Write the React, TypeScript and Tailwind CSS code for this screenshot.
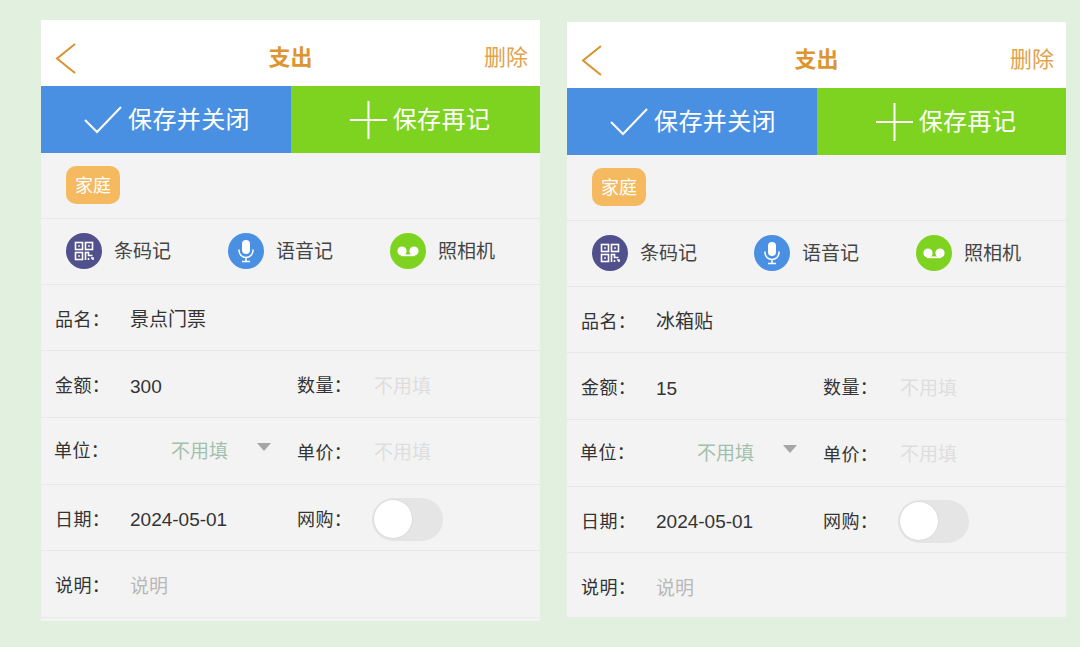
const font = { fontFamily: '"Liberation Sans", "Noto Sans CJK SC", sans-serif' };

function Row({ children, h = "h-[66px]" }: { children: React.ReactNode; h?: string }) {
  return <div className={`${h} shrink-0 relative flex items-center border-b border-[#e8e8e8]`}>{children}</div>;
}

function Label({ children, cls = "left-[14px] mt-[4px]" }: { children: React.ReactNode; cls?: string }) {
  return <span className={`absolute ${cls} text-[18px] leading-none text-[#333] tracking-[0.4px] whitespace-pre`}>{children}</span>;
}

function Val({ children, cls, color = "text-[#333]" }: { children: React.ReactNode; cls: string; color?: string }) {
  return <span className={`absolute ${cls} text-[19px] leading-none ${color} whitespace-pre`}>{children}</span>;
}

function QrIcon() {
  return (
    <svg width="20" height="20" viewBox="0 0 20 20" fill="none" stroke="white" strokeWidth="1.6">
      <rect x="1.5" y="1.5" width="7" height="7" />
      <rect x="11.5" y="1.5" width="7" height="7" />
      <rect x="1.5" y="11.5" width="7" height="7" />
      <rect x="4.2" y="4.2" width="1.6" height="1.6" fill="white" stroke="none" />
      <rect x="14.2" y="4.2" width="1.6" height="1.6" fill="white" stroke="none" />
      <rect x="4.2" y="14.2" width="1.6" height="1.6" fill="white" stroke="none" />
      <path d="M11.5 19v-7.5h3v3h4M14.5 17v2M17 17h2v2" />
    </svg>
  );
}

function MicIcon() {
  return (
    <svg width="20" height="24" viewBox="0 0 20 24" fill="none" stroke="white" strokeWidth="1.5">
      <rect x="6" y="1" width="8" height="14" rx="4" fill="white" stroke="none" />
      <path d="M3 10.5v1a7 7 0 0 0 14 0v-1M10 18.5V22M6 22.5h8" />
    </svg>
  );
}

function TapeIcon() {
  return (
    <svg width="24" height="14" viewBox="0 0 24 14" fill="white">
      <circle cx="6" cy="7" r="4.6" />
      <circle cx="18" cy="7" r="4.6" />
      <rect x="5" y="10.4" width="14" height="1.8" />
    </svg>
  );
}

function Tool({ bg, icon, text, cls }: { bg: string; icon: React.ReactNode; text: string; cls: string }) {
  return (
    <div className={`absolute ${cls} flex items-center gap-[12px] mt-[-2px]`}>
      <span className={`w-9 h-9 rounded-full ${bg} flex items-center justify-center`}>{icon}</span>
      <span className="text-[19px] leading-none text-[#444] mt-[2px]">{text}</span>
    </div>
  );
}

function Phone({ name, amount, height, mt }: { name: string; amount: string; height: string; mt: string }) {
  return (
    <div className={`w-[499px] ${height} ${mt} shrink-0 bg-[#f3f3f3] flex flex-col overflow-hidden`}>
      <div className="h-[66px] shrink-0 bg-white relative flex items-center justify-center">
        <svg className="absolute left-[13px] top-[22px]" width="24" height="32" viewBox="0 0 24 32" fill="none" stroke="#d9922e" strokeWidth="2">
          <path d="M21 2 3 16.5 21 31" />
        </svg>
        <span className="text-[22px] leading-none font-bold text-[#dd9530] mt-[10px]">支出</span>
        <span className="absolute right-[12px] top-[27px] text-[22px] leading-none text-[#e2a24e]">删除</span>
      </div>
      <div className="h-[67px] shrink-0 flex">
        <div className="w-[250px] bg-[#4a90e2] flex items-center justify-center gap-[6px] text-white text-[24px] leading-none pl-[2px]">
          <svg width="38" height="28" viewBox="0 0 38 28" fill="none" stroke="white" strokeWidth="2">
            <path d="M1 14 13 26 37 1" />
          </svg>
          <span className="tracking-[0.4px] mt-[1px]">保存并关闭</span>
        </div>
        <div className="flex-1 bg-[#7ed321] flex items-center justify-center gap-[6px] text-white text-[24px] leading-none pl-[9px]">
          <svg width="37" height="38" viewBox="0 0 37 38" fill="none" stroke="white" strokeWidth="2">
            <path d="M18.5 0v38M0 19h37" />
          </svg>
          <span className="tracking-[0.4px] mt-[1px]">保存再记</span>
        </div>
      </div>
      <Row>
        <span className="absolute left-[25px] top-[13px] w-[54px] h-[38px] rounded-[10px] bg-[#f5b95f] text-white text-[18px] leading-[40px] text-center">家庭</span>
      </Row>
      <Row>
        <Tool cls="left-[25px]" bg="bg-[#50508c]" icon={<QrIcon />} text="条码记" />
        <Tool cls="left-[187px]" bg="bg-[#4a90e2]" icon={<MicIcon />} text="语音记" />
        <Tool cls="left-[349px]" bg="bg-[#7ed321]" icon={<TapeIcon />} text="照相机" />
      </Row>
      <Row>
        <Label>品名：</Label>
        <Val cls="left-[89px] mt-[4px]">{name}</Val>
      </Row>
      <Row h="h-[67px]">
        <Label>金额：</Label>
        <Val cls="left-[89px] mt-[4px]">{amount}</Val>
        <Label cls="left-[256px] mt-[4px]">数量：</Label>
        <Val cls="left-[333px] mt-[4px]" color="text-[#dedede]">不用填</Val>
      </Row>
      <Row h="h-[67px]">
        <Label cls="left-[13px] top-[24px]">单位：</Label>
        <Val cls="left-[130px] top-[24px]" color="text-[#a3bfae]">不用填</Val>
        <span className="absolute left-[216px] top-[25px] w-0 h-0 border-x-[7px] border-x-transparent border-t-[8px] border-t-[#a6a6a6]" />
        <Label cls="left-[256px] top-[26px]">单价：</Label>
        <Val cls="left-[333px] top-[25px]" color="text-[#dedede]">不用填</Val>
      </Row>
      <Row>
        <Label>日期：</Label>
        <Val cls="left-[89px] mt-[4px]">2024-05-01</Val>
        <Label cls="left-[256px] mt-[4px]">网购：</Label>
        <span className="absolute left-[331px] top-[13px] w-[71px] h-[43px] rounded-full bg-[#e5e5e5]">
          <span className="absolute left-[2px] top-[2px] w-[38px] h-[38px] rounded-full bg-white shadow-[0_0_2px_rgba(0,0,0,0.12)]" />
        </span>
      </Row>
      <Row h="h-[67px]">
        <Label>说明：</Label>
        <Val cls="left-[89px] mt-[4px]" color="text-[#b8b8b8]">说明</Val>
      </Row>
    </div>
  );
}

export default function App() {
  return (
    <div className="w-[1080px] h-[647px] bg-[#e2f0e0] flex items-start overflow-hidden pl-[41px] gap-[27px]" style={font}>
      <Phone name="景点门票" amount="300" height="h-[601px]" mt="mt-[20px]" />
      <Phone name="冰箱贴" amount="15" height="h-[595px]" mt="mt-[22px]" />
    </div>
  );
}
